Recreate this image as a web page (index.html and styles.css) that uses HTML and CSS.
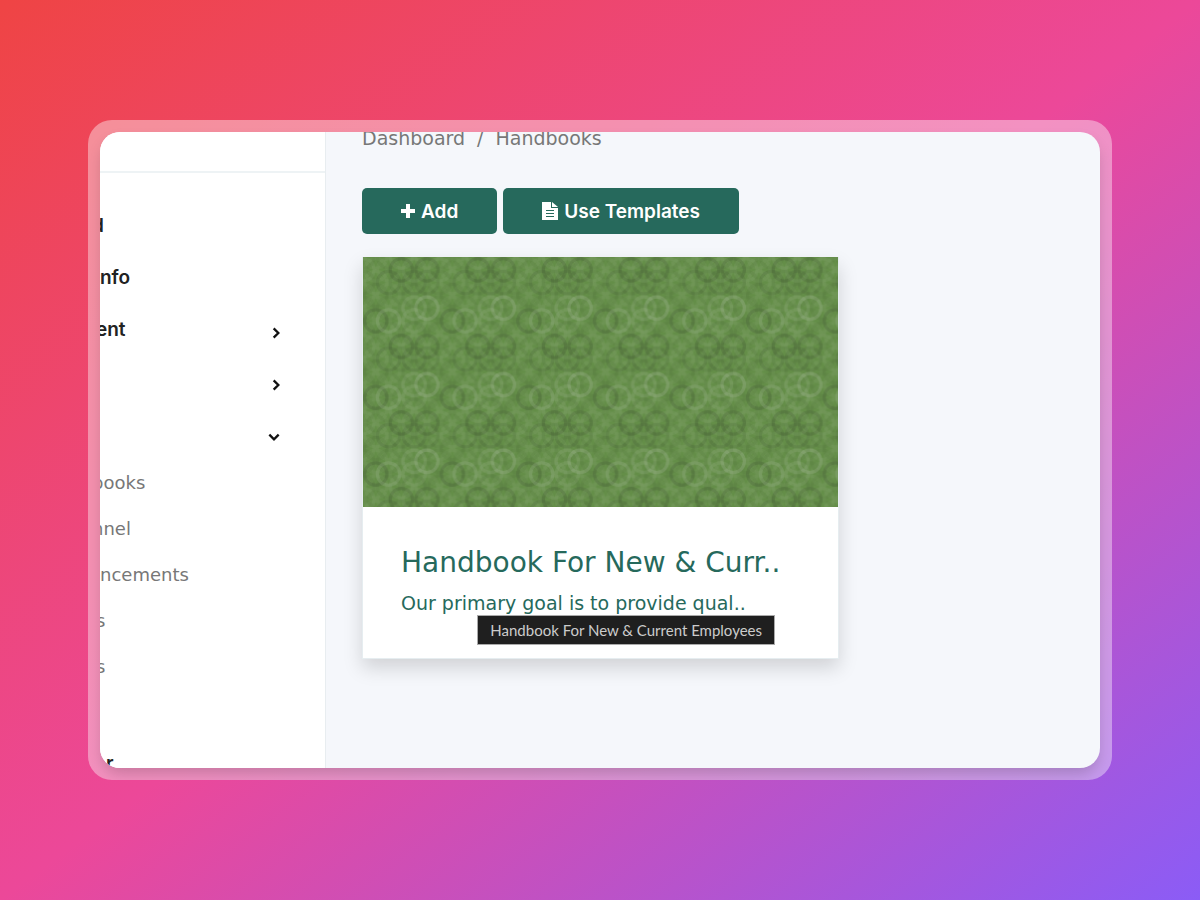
FILE: index.html
```html
<!DOCTYPE html>
<html lang="en">
<head>
<meta charset="utf-8">
<meta name="viewport" content="width=device-width, initial-scale=1">
<title>Handbooks</title>
<link rel="stylesheet" href="styles.css">
</head>
<body>
<div class="frame">
  <div class="app">
    <aside class="sidebar">
      <div class="sidebar-head"></div>
      <nav class="menu">
        <a class="item cut" href="#">d</a>
        <a class="item" href="#">nfo</a>
        <a class="item cut-small" href="#">ent<svg class="chevron" viewBox="0 0 12 12"><path d="M4 2l4 4-4 4"/></svg></a>
        <a class="item" href="#" aria-label="Expand"><svg class="chevron" viewBox="0 0 12 12"><path d="M4 2l4 4-4 4"/></svg></a>
        <a class="item" href="#" aria-label="Collapse"><svg class="chevron open" viewBox="0 0 12 12"><path d="M2 4l4 4 4-4"/></svg></a>
        <div class="submenu">
          <a class="subitem cut" href="#">books</a>
          <a class="subitem cut" href="#">nnel</a>
          <a class="subitem" href="#">ncements</a>
          <a class="subitem cut-small" href="#">s</a>
          <a class="subitem cut-small" href="#">s</a>
        </div>
        <a class="item last" href="#">r</a>
      </nav>
    </aside>
    <main class="main">
      <nav class="crumbs"><a href="#">Dashboard</a><span>/</span><a href="#">Handbooks</a></nav>
      <div class="actions">
        <button class="btn" type="button"><svg class="plus" viewBox="0 0 14 14"><path d="M5 0h4v5h5v4H9v5H5V9H0V5h5z"/></svg>Add</button>
        <button class="btn" type="button"><svg class="file" viewBox="0 0 16 18"><path fill-rule="evenodd" d="M0 0h9v6h7v12H0zM4 8v1h8V8zM4 11v1h8v-1zM4 14v1h8v-1z"/><path d="M10 0l6 5h-6z"/></svg>Use Templates</button>
      </div>
      <article class="card" title="Handbook For New &amp; Current Employees">
        <svg class="cover" aria-hidden="true">
          <defs>
            <g id="rings" fill="none" stroke-width="4">
              <g stroke="#222">
                <circle cx="0" cy="0" r="14" opacity=".05"/><circle cx="32" cy="0" r="14" opacity=".04"/><circle cx="64" cy="0" r="14" opacity=".06"/>
                <circle cx="48" cy="16" r="14" opacity=".13"/><circle cx="80" cy="16" r="14" opacity=".12"/><circle cx="0" cy="32" r="14" opacity=".05"/>
                <circle cx="32" cy="32" r="14" opacity=".1"/><circle cx="48" cy="32" r="14" opacity=".06"/><circle cx="64" cy="32" r="14" opacity=".09"/><circle cx="80" cy="32" r="14" opacity=".08"/>
                <circle cx="16" cy="48" r="14" opacity=".05"/><circle cx="64" cy="48" r="14" opacity=".05"/><circle cx="0" cy="64" r="14" opacity=".04"/><circle cx="32" cy="64" r="14" opacity=".04"/>
                <circle cx="16" cy="80" r="14" opacity=".14"/><circle cx="80" cy="80" r="14" opacity=".03"/>
              </g>
              <g stroke="#ddd">
                <circle cx="16" cy="0" r="14" opacity=".04"/><circle cx="48" cy="0" r="14" opacity=".06"/><circle cx="80" cy="0" r="14" opacity=".05"/>
                <circle cx="0" cy="16" r="14" opacity=".06"/><circle cx="16" cy="16" r="14" opacity=".04"/><circle cx="32" cy="16" r="14" opacity=".04"/><circle cx="64" cy="16" r="14" opacity=".06"/>
                <circle cx="16" cy="32" r="14" opacity=".05"/><circle cx="0" cy="48" r="14" opacity=".04"/><circle cx="32" cy="48" r="14" opacity=".04"/><circle cx="48" cy="48" r="14" opacity=".04"/><circle cx="80" cy="48" r="14" opacity=".03"/>
                <circle cx="16" cy="64" r="14" opacity=".04"/><circle cx="48" cy="64" r="14" opacity=".04"/><circle cx="64" cy="64" r="14" opacity=".09"/><circle cx="80" cy="64" r="14" opacity=".16"/>
                <circle cx="0" cy="80" r="14" opacity=".03"/><circle cx="32" cy="80" r="14" opacity=".13"/><circle cx="48" cy="80" r="14" opacity=".05"/><circle cx="64" cy="80" r="14" opacity=".08"/>
              </g>
            </g>
            <pattern id="tile" width="76.6" height="76.6" patternUnits="userSpaceOnUse" viewBox="0 0 96 96">
              <rect width="96" height="96" fill="#648e48"/>
              <use href="#rings"/><use href="#rings" x="96"/><use href="#rings" y="96"/><use href="#rings" x="96" y="96"/>
            </pattern>
          </defs>
          <rect width="100%" height="100%" fill="url(#tile)"/>
        </svg>
        <div class="card-body">
          <h2>Handbook For New &amp; Curr..</h2>
          <p>Our primary goal is to provide qual..</p>
        </div>
        <div class="tooltip" role="tooltip">Handbook For New &amp; Current Employees</div>
      </article>
    </main>
  </div>
</div>
</body>
</html>
```
FILE: styles.css
```css
* { box-sizing: border-box; }
body {
  margin: 0;
  min-height: 100vh;
  padding: 120px 88px;
  display: grid;
  background: linear-gradient(to bottom right, #ef4444, #ec4899, #8b5cf6);
  font-family: "DejaVu Sans", sans-serif;
}
a { color: inherit; text-decoration: none; }
.frame {
  padding: 12px;
  border-radius: 24px;
  background: rgba(255, 255, 255, .4);
  overflow: hidden;
  display: grid;
}
.app {
  display: flex;
  height: calc(100vh - 264px);
  border-radius: 20px;
  overflow: hidden;
  background: #f5f7fb;
  box-shadow: 0 8px 16px -3px rgba(0, 0, 0, .2);
}
.sidebar {
  flex: 0 0 226px;
  background: #fff;
  border-right: 1px solid #e8edf0;
  overflow: hidden;
}
.sidebar-head { height: 41px; border-bottom: 2px solid #eef3f5; }
.menu { padding-top: 26px; }
.item {
  display: flex;
  align-items: center;
  height: 52px;
  padding-right: 42px;
  font: 600 19px Inter, sans-serif;
  color: #222;
}
.subitem {
  display: flex;
  align-items: center;
  height: 46px;
  font-size: 18px;
  color: #777;
}
.cut { margin-left: -8px; }
.cut-small { margin-left: -4px; }
.last { margin-top: 48px; padding-left: 6px; }
.chevron {
  width: 14px;
  height: 14px;
  margin-left: auto;
  margin-top: 8px;
  fill: none;
  stroke: #111;
  stroke-width: 2;
}
.open { margin-right: 2px; }
.main { flex: 1; min-width: 0; padding: 0 36px; }
.crumbs {
  display: flex;
  gap: 12px;
  margin-top: -6px;
  font-size: 19px;
  line-height: 24px;
  color: #777;
}
.actions { display: flex; gap: 6px; margin-top: 38px; }
.btn {
  display: flex;
  align-items: center;
  gap: 6px;
  height: 46px;
  padding: 0 39px;
  border: 0;
  border-radius: 5px;
  background: #26695c;
  color: #fff;
  font: 600 19px Inter, sans-serif;
}
.btn svg { fill: #fff; }
.plus { width: 14px; height: 14px; }
.file { width: 16px; height: 18px; }
.card {
  position: relative;
  width: 100%;
  max-width: 477px;
  margin-top: 23px;
  border: 1px solid #e6edf0;
  border-top: 0;
  background: #fff;
  box-shadow: 0 9px 18px rgba(0, 0, 0, .15);
}
.cover { display: block; width: 100%; height: 250px; }
.card-body { padding: 36px 38px 42px; color: #26695c; }
h2 { margin: 0; font-size: 28px; font-weight: 400; line-height: 40px; white-space: nowrap; }
p { margin: 8px 0 0; font-size: 19px; line-height: 25px; white-space: nowrap; }
.tooltip {
  position: absolute;
  right: 63px;
  bottom: 13px;
  padding: 0 12px;
  border: 1px solid #aaa;
  background: #1f1f1f;
  color: #ccc;
  font: 15px/28px Lato, sans-serif;
  white-space: nowrap;
}
```
